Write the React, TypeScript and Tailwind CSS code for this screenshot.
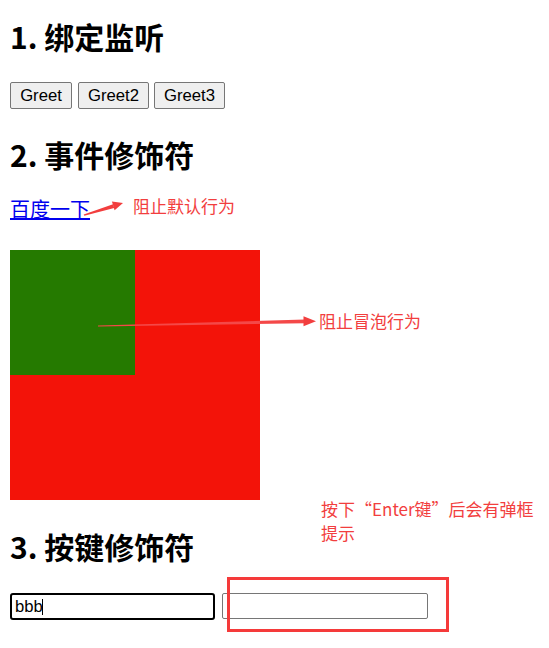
import React from "react";

const cjk = { fontFamily: '"Noto Sans CJK SC", "Liberation Sans", sans-serif' };
const arial = { fontFamily: '"Liberation Sans", "Noto Sans CJK SC", sans-serif' };

export default function App() {
  return (
    <div className="relative w-[549px] h-[648px] bg-white overflow-hidden px-[10px] text-black" style={cjk}>
      <h2 className="mt-[18px] h-[36px] leading-[36px] text-[30px] font-bold whitespace-nowrap">1. 绑定监听</h2>

      <div className="mt-[28px] flex items-start" style={arial}>
        <button className="w-[62px] h-[27px] bg-[#efefef] border border-[#767676] rounded-[2px] text-[16.7px] leading-[25px] text-black">Greet</button>
        <button className="ml-[6px] w-[71px] h-[27px] bg-[#efefef] border border-[#767676] rounded-[2px] text-[16.7px] leading-[25px] text-black">Greet2</button>
        <button className="ml-[5px] w-[71px] h-[27px] bg-[#efefef] border border-[#767676] rounded-[2px] text-[16.7px] leading-[25px] text-black">Greet3</button>
      </div>

      <h2 className="mt-[27px] h-[36px] leading-[36px] text-[30px] font-bold whitespace-nowrap">2. 事件修饰符</h2>

      <div className="mt-[24px] h-[26px] leading-[26px] text-[20px]">
        <a href="#" className="text-[#0000ee] underline">百度一下</a>
      </div>

      <div className="mt-[28px] w-[250px] h-[250px] bg-[#f31309]">
        <div className="w-[125px] h-[125px] bg-[#257a00]"></div>
      </div>

      <h2 className="mt-[28px] h-[36px] leading-[36px] text-[30px] font-bold whitespace-nowrap">3. 按键修饰符</h2>

      <div className="mt-[29px] flex items-start" style={arial}>
        <div className="relative">
          <input
            defaultValue="bbb"
            className="block w-[205px] h-[27px] border-2 border-black rounded-[3px] px-[3px] text-[16.7px] outline-none text-black"
          />
          <span className="absolute left-[32px] top-[6px] w-px h-[16px] bg-black"></span>
        </div>
        <input className="ml-[7px] w-[206px] h-[26px] border border-[#767676] rounded-[2px] px-[3px] text-[16.7px] outline-none" />
      </div>

      {/* annotations */}
      <div className="absolute left-[133px] top-[197px] text-[17px] leading-[17px] text-[#f23e3e] whitespace-nowrap">阻止默认行为</div>
      <div className="absolute left-[319px] top-[312px] text-[17px] leading-[17px] text-[#f23e3e] whitespace-nowrap">阻止冒泡行为</div>
      <div className="absolute left-[321px] top-[497px] text-[17px] leading-[24px] text-[#f23e3e] whitespace-nowrap">
        按下“Enter键”后会有弹框
        <br />
        提示
      </div>
      <div className="absolute left-[227px] top-[577px] w-[222px] h-[55px] border-[3px] border-[#f53a3a] pointer-events-none"></div>

      <svg className="absolute left-0 top-0 pointer-events-none" width="549" height="648" viewBox="0 0 549 648">
        <polygon points="83.7,214.4 84.3,215.8 114.2,208.0 113.0,204.2" fill="#f23e3e" />
        <polygon points="123,203 114.6,210.2 111.9,201.6" fill="#f23e3e" />
        <polygon points="98,325.5 98,326.6 305,323.2 305,319.6" fill="#f44848" />
        <polygon points="316,321.2 303.5,316.3 303.5,326.2" fill="#f23e3e" />
      </svg>
    </div>
  );
}
